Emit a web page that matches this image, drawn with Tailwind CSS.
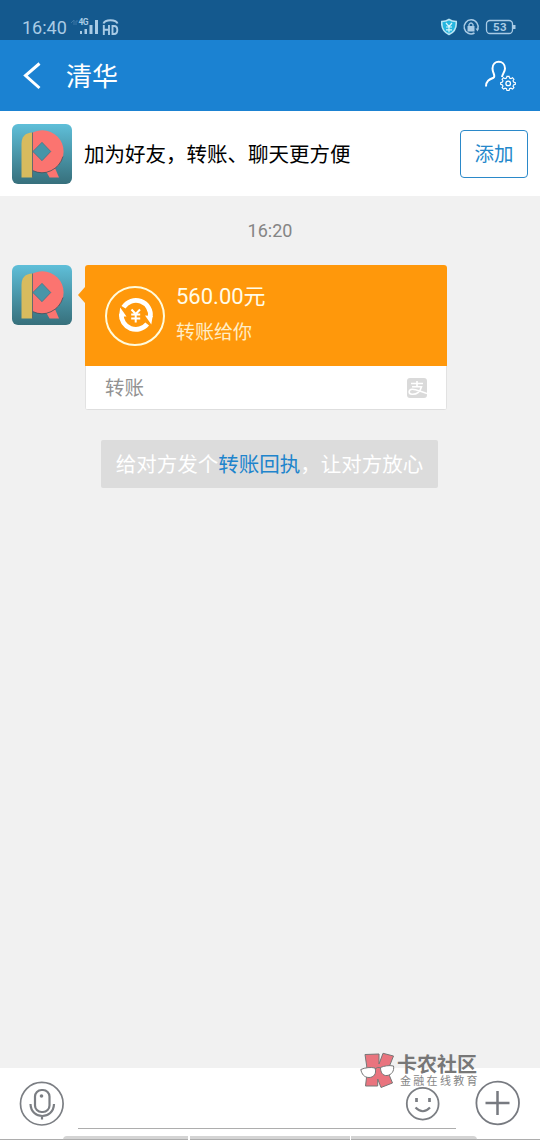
<!DOCTYPE html>
<html lang="zh-CN">
<head>
<meta charset="utf-8">
<title>清华</title>
<script src="https://cdn.jsdelivr.net/npm/@tailwindcss/browser@4"></script>
</head>
<body class="bg-[#f1f1f1]">
<svg class="hidden">
  <defs>
    <symbol id="avatar" viewBox="0 0 60 60">
      <path d="M34.500 48L43 44L47 53.500H37.500Z" fill="#fb7470"/>
      <path fill-rule="evenodd" d="M20.500 8.800C23 7.500 27 6.300 30.500 6.300A20.700 20.700 0 1 1 30.500 48.500C27 48.500 23 47.700 20.500 46.500ZM20.800 27.500L30 36.700L38.800 27.500L30 18.300Z" fill="#fb7470"/>
      <path d="M20.500 46.500Q30 51 39 46.700T51 32.500" fill="none" stroke="#454f59" stroke-width=".8"/>
      <path d="M20.800 27.500L30 18.300L38.800 27.500L30 36.700Z" fill="#4795a8" stroke="#5e6670" stroke-width=".6"/>
      <path d="M20.300 8.500V53.500H9.500V20Q9.500 9 20.300 8.500Z" fill="#d8bb5e"/>
      <path d="M20.500 8.500V53.500" stroke="#54606a" stroke-width=".8"/>
    </symbol>
  </defs>
</svg>
<div class="w-[540px] h-[1140px] flex flex-col overflow-hidden bg-[#f1f1f1] font-['Roboto','Noto_Sans_CJK_SC',sans-serif]">
  <header class="shrink-0">
    <div class="h-10 bg-[#14598e] flex items-start pt-[14px] pl-[22px] pr-[23px] text-[#a9cbe5]">
      <span class="text-[18px] leading-[28px] w-[49px] whitespace-nowrap">16:40</span>
      <svg class="w-[48px] h-[24px] mt-[1px]" viewBox="71 15 48 24" fill="currentColor">
        <path d="M71 23L74 20V25M76 25V21H78" fill="none" stroke="#3b77a5"/>
        <text x="78.500" y="25" font-size="8.500" font-weight="700" textLength="10">4G</text>
        <path d="M80 31h2v3h-2zM84.500 29h2.500v5h-2.500zM89.500 25h3v9h-3zM95 20h3v14h-3z"/>
        <path d="M103.500 23.500C105 19 116 19 117.500 23.500" fill="none" stroke="currentColor" stroke-width="2"/>
        <path d="M103.800 25v10M109 25v10M104 29.800h5M112.500 26v8h1.500q3.300 0 3.300-4t-3.300-4z" fill="none" stroke="currentColor" stroke-width="1.900"/>
      </svg>
      <svg class="w-[76px] h-[20px] ml-auto mt-[3px]" viewBox="441 17 76 20">
        <path d="M449 19.500Q452 21.500 456.200 21.500Q457 31 449 34.500Q441 31 441.800 21.500Q446 21.500 449 19.500Z" fill="#25b5df" stroke="#b8e5f4" stroke-width="1.600"/>
        <path d="M446 23l3 3.500l3-3.500M449 26.500v6M446 27h6M446 29.800h6" fill="none" stroke="#d8f4fc" stroke-width="1.200"/>
        <path d="M474.500 33A7 7 0 1 1 477.800 29" fill="none" stroke="#a9cbe5" stroke-width="1.500"/>
        <path d="M475.500 28.500h3.500l-1.500 3z" fill="#a9cbe5"/>
        <path d="M467.500 26h7v5.500h-7z" fill="#a9cbe5"/><path d="M469 26v-1.500q2-3 4 0v1.500" fill="none" stroke="#a9cbe5" stroke-width="1.300"/>
        <rect x="486.500" y="20.500" width="26" height="13" rx="3.500" fill="none" stroke="#a9cbe5" stroke-width="1.300"/>
        <path d="M513 25h2.500v4h-2.500z" fill="#a9cbe5"/>
        <text x="493" y="31.200" font-size="11.500" font-weight="700" fill="#a9cbe5" textLength="13.500">53</text>
      </svg>
    </div>
    <div class="h-[71px] bg-[#1b82d2] flex items-center pl-[22px] pr-[23px] text-white">
      <svg class="w-5 h-[28px]" viewBox="0 0 20 28" fill="none" stroke="white" stroke-width="3"><path d="M17.500 1.500L3.500 13.500L17.500 26"/></svg>
      <h1 class="ml-6 pt-[2px] text-[26px] leading-[36px]">清华</h1>
      <svg class="w-[33px] h-[32px] ml-auto" viewBox="484 60 33 32" fill="none" stroke="white">
        <path d="M486 86.500C486 81 489 79.500 493.500 77.800C496 76 492.500 73 492.500 68.500C492.500 59.500 505 59.500 505 68.500C505 71.500 502.500 74 502 77" stroke-width="2"/>
        <g stroke-width="1.300" transform="translate(-.3 -.6)"><path d="M507.300 76.500h2.400l.5 2 1.600.6 1.800-1 1.600 1.700-1 1.800.6 1.500 2 .6v2l-2 .6-.6 1.500 1 1.800-1.600 1.600-1.800-1-1.600.6-.5 2h-2.400l-.5-2-1.600-.6-1.800 1-1.600-1.600 1-1.800-.6-1.500-2-.6v-2l2-.6.6-1.500-1-1.800 1.600-1.700 1.800 1 1.600-.6z" transform="translate(59.300 10.800) scale(.883 .865)"/><circle cx="508.500" cy="84" r="2.300"/></g>
      </svg>
    </div>
  </header>

  <section class="h-[85px] shrink-0 bg-white flex items-center px-3">
    <svg class="size-[60px] rounded-[6px] bg-linear-to-b from-[#5fbfd9] to-[#37707c]"><use href="#avatar"/></svg>
    <p class="ml-3 pt-[2px] text-[20.500px] leading-[30px] text-black whitespace-nowrap">加为好友，转账、聊天更方便</p>
    <button class="ml-auto w-[68px] h-[48px] pt-[2px] border border-[#2b89c9] rounded-[4px] text-[19.500px] text-[#2488cb]">添加</button>
  </section>

  <main class="flex-1 min-h-0 flex flex-col">
    <time class="pt-[21px] text-center text-[18px] leading-[28px] text-[#858585]">16:20</time>
    <div class="mt-5 pl-3 flex items-start">
      <svg class="size-[60px] rounded-[6px] bg-linear-to-b from-[#5fbfd9] to-[#37707c]"><use href="#avatar"/></svg>
      <svg class="w-[8px] h-[18px] mt-[21px] ml-[5px]" viewBox="0 0 8 18"><path d="M8 1L1 9L8 17Z" fill="#ff980b"/></svg>
      <article class="w-[362px] h-[145px] rounded-[3px] overflow-hidden bg-white border-b border-[#dedede]">
        <div class="h-[101px] bg-[#ff980b] flex pl-5 pt-5 text-white">
          <svg class="size-[62px]" viewBox="0 0 62 62" fill="none" stroke="white">
            <circle cx="30" cy="31" r="29" stroke-width="2" stroke="#fffbdc"/>
            <path d="M18.500 22.200A14.600 14.600 0 0 1 45.300 32" stroke-width="4.800"/>
            <path d="M42.200 39A14.600 14.600 0 0 1 16.300 29" stroke-width="4.800"/>
            <path d="M15.200 22.500L21.500 31.500L14 31.500ZM40 30.500L47.700 31L46.300 39.500Z" fill="white" stroke="none"/>
            <path d="M26.500 24.500L30.700 29L35 24.500M30.700 29V37.500M26.200 29.500H35.200M26.200 33.500H35.200" stroke-width="2"/>
          </svg>
          <div class="ml-[9px] -mt-[5px]">
            <p class="text-[22px] leading-[34px] whitespace-nowrap text-[#fffce8]">560.00元</p>
            <p class="mt-[4px] text-[19px] leading-[30px] text-[#ffedc5]">转账给你</p>
          </div>
        </div>
        <div class="h-[43px] flex items-center justify-between pl-[19px] pr-[19px] border-x border-[#e2e2e2]">
          <span class="pt-[2px] text-[19.500px] text-[#929292]">转账</span>
          <svg class="size-[20px]" viewBox="0 0 20 20" fill="none" stroke="white" stroke-width="1.600"><rect width="20" height="20" rx="3" fill="#dadada" stroke="none"/><path d="M4 5.500H16M10 3V8.500M5 8.700H14.500C13 14 9 16.500 5 16.300C1 16 1.500 11.500 5 11.300C9 11 14 14 20 15.500"/></svg>
        </div>
      </article>
    </div>
    <div class="mt-[30px] ml-[101px] w-[337px] h-[48px] pt-[2px] rounded-[2px] bg-[#dcdcdc] flex items-center justify-center text-[20.500px] text-white whitespace-nowrap"><span>给对方发个<a class="text-[#2084cc]">转账回执</a>，让对方放心</span></div>
  </main>

  <footer class="relative h-[72px] shrink-0 bg-white flex items-start pl-[19px] pr-[19px]">
    <svg class="w-[46px] h-[46px] mt-[13px]" viewBox="0 0 46 46" fill="none" stroke="#7b7e83">
      <circle cx="22.800" cy="22.700" r="21.300" stroke-width="1.700"/>
      <rect x="16" y="9" width="14.500" height="22" rx="6.500" stroke-width="2.200"/><circle cx="22.500" cy="15" r="1.800" fill="#7b7e83" stroke="none"/>
      <path d="M11.500 23C12 39 34.500 39 35 23M23 35V38.500" stroke-width="2.200"/>
    </svg>
    <div class="ml-[13px] w-[378px] h-[61px] border-b border-[#adadad] flex justify-end pr-[15px] pt-[18px]">
      <svg class="size-[36px]" viewBox="0 0 36 36" fill="none" stroke="#7b7e83"><circle cx="17.700" cy="17.700" r="15.900" stroke-width="1.800"/><path d="M11.500 12v4M24.500 12v4" stroke-width="2.700"/><path d="M10.500 21.500Q18 29 25 21.500" stroke-width="2.200"/></svg>
    </div>
    <svg class="size-[46px] ml-auto mt-[12px]" viewBox="0 0 46 46" fill="none" stroke="#777a80"><circle cx="22.700" cy="23" r="21.300" stroke-width="1.800"/><path d="M10.500 23H34.500M22.500 11V35" stroke-width="2.500"/></svg>
    <div class="absolute left-0 bottom-0 w-full h-[4px] flex items-end">
      <i class="w-[63px] h-px bg-[#adadad]"></i><i class="w-[125px] h-[4px] bg-[#d4d4d4] border-b border-[#adadad] rounded-tl-sm"></i><i class="ml-[2px] w-[160px] h-[4px] bg-[#d4d4d4] border-b border-[#adadad]"></i><i class="ml-px w-[126px] h-[4px] bg-[#d4d4d4] border-b border-[#adadad] rounded-tr-sm"></i><i class="flex-1 h-px bg-[#adadad]"></i>
    </div>
    <div class="absolute left-[360px] -top-[16px] w-[120px] h-[38px] flex">
      <svg class="w-[36px] h-[38px] shrink-0" viewBox="0 0 36 38" stroke="#777" stroke-width="1">
        <path d="M5 2.500L19 2V12L23 1.300L33.500 4L27.500 19L32.500 31L21 35.500L17.700 27V34H5.500L6.700 24V14Z" fill="#e9747e"/>
        <path d="M.8 17.500C5 15.500 11 15 15 16C17 22 13.500 25.500 9 25.500C4 25.500 1.800 22 .8 17.500ZM20.500 15.500C24 14 29 13 33.500 14C34.500 19 31.500 23 27 23.500C22.500 24 20.500 20 20.500 15.500Z" fill="white"/><path d="M15 17Q17.500 14.500 20.500 15.700" fill="none"/>
      </svg>
      <div class="ml-px text-[#777777] whitespace-nowrap">
        <p class="text-[20px] leading-[22px] font-bold mt-[2px]">卡农社区</p>
        <p class="ml-[3px] text-[11px] leading-[12px] tracking-[2.300px] text-[#858585]">金融在线教育</p>
      </div>
    </div>
  </footer>
</div>
</body>
</html>
